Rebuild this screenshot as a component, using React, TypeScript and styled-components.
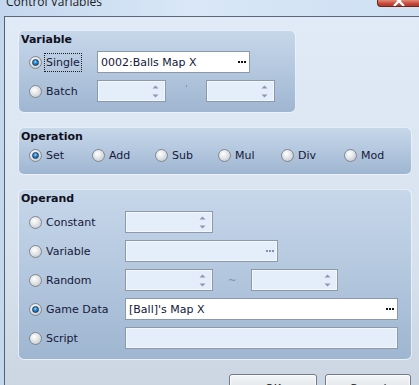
import React from 'react';
import styled, { createGlobalStyle } from 'styled-components';

const GlobalStyle = createGlobalStyle`
  html, body {
    margin: 0;
    padding: 0;
    overflow: hidden;
    background: #c8dbf1;
  }
  body {
    font-family: "DejaVu Sans", Verdana, sans-serif;
    font-size: 11px;
    color: #16183a;
  }
`;

const Window = styled.div`
  width: 419px;
  height: 385px;
  display: flex;
  flex-direction: column;
  overflow: hidden;
  background: linear-gradient(90deg, #c3d7ee 0%, #d9e7f7 45%, #cfe0f3 100%);
`;

const TitleBar = styled.div`
  height: 16px;
  flex: none;
  display: flex;
  align-items: flex-start;
  padding-left: 6px;
`;

const TitleText = styled.div`
  font-family: "Open Sans", "DejaVu Sans", sans-serif;
  font-size: 12px;
  line-height: 12px;
  margin-top: -4px;
  color: #1b1b1b;
`;

const CloseButton = styled.div`
  margin-left: auto;
  width: 42px;
  height: 7px;
  box-sizing: border-box;
  border: 1px solid #6e2418;
  border-top: none;
  border-right: none;
  border-radius: 0 0 0 4px;
  background: linear-gradient(180deg, #e28a78 0%, #c6473a 60%, #b13a2c 100%);
  overflow: hidden;
  display: flex;
  justify-content: center;
`;

const Frame = styled.div`
  flex: 1;
  display: flex;
  padding-left: 4px;
`;

const Client = styled.div`
  flex: 1;
  border-left: 1px solid #56616e;
  border-top: 1px solid #5c6876;
  background: linear-gradient(180deg, #e1ebf7 0%, #d9e3ef 60%, #cad5e1 100%);
  padding: 13px 0 0 13px;
  display: flex;
  flex-direction: column;
  align-items: flex-start;
  gap: 14px;
`;

const Group = styled.div<{ $w: number; $h: number }>`
  width: ${(p) => p.$w}px;
  height: ${(p) => p.$h}px;
  box-sizing: border-box;
  border: 1px solid rgba(240, 246, 252, 0.85);
  border-radius: 6px;
  background: linear-gradient(180deg, #c7d7ea 0%, #b3c7de 50%, #9fb6d1 100%);
  padding: 2px 0 0 2px;
  display: flex;
  flex-direction: column;
`;

const GroupTitle = styled.div`
  font-weight: bold;
  line-height: 13px;
  color: #101020;
`;

const Rows = styled.div<{ $top: number }>`
  margin-top: ${(p) => p.$top}px;
  padding-left: 8px;
  display: flex;
  flex-direction: column;
  gap: 7px;
`;

const Row = styled.div<{ $label: number }>`
  display: grid;
  grid-template-columns: ${(p) => p.$label}px auto;
  align-items: center;
  height: 22px;
`;

const Controls = styled.div`
  display: flex;
  align-items: center;
`;

const OptionRow = styled.div`
  display: flex;
  height: 13px;
  align-items: center;
`;

const Option = styled.label<{ $w?: number }>`
  display: flex;
  align-items: center;
  gap: 3px;
  width: ${(p) => (p.$w ? `${p.$w}px` : 'auto')};
`;

const RadioDot = styled.span<{ $on?: boolean }>`
  width: 13px;
  height: 13px;
  flex: none;
  box-sizing: border-box;
  border-radius: 50%;
  border: 1px solid #80878f;
  background: radial-gradient(circle at 40% 35%, #ffffff 0%, #e2e4e7 45%, #b9bec4 100%);
  display: flex;
  align-items: center;
  justify-content: center;
  &::after {
    content: '';
    display: ${(p) => (p.$on ? 'block' : 'none')};
    width: 7px;
    height: 7px;
    box-sizing: border-box;
    border-radius: 50%;
    border: 1px solid #17395c;
    background: radial-gradient(circle at 45% 35%, #9ad8ff 0%, #2b8bd3 40%, #0c4f8c 100%);
  }
`;

const LabelText = styled.span<{ $focus?: boolean }>`
  padding: 2px 1px;
  line-height: 13px;
  white-space: nowrap;
  outline: ${(p) => (p.$focus ? '1px dotted #202020' : 'none')};
`;

const Field = styled.div<{ $w: number; $on?: boolean }>`
  width: ${(p) => p.$w}px;
  height: 22px;
  box-sizing: border-box;
  border: 1px solid #8b99aa;
  background: ${(p) => (p.$on ? '#ffffff' : '#e4eefa')};
  box-shadow: ${(p) => (p.$on ? 'none' : 'inset 0 0 0 1px #f3f7fc')};
  display: flex;
  align-items: center;
  padding: 0 3px 0 3px;
  color: #14163a;
  white-space: nowrap;
`;

const FieldText = styled.span`
  flex: 1;
  line-height: 13px;
`;

const SpinArrows = styled.svg`
  margin-right: 3px;
  flex: none;
`;

const Between = styled.div<{ $w: number; $up?: number }>`
  width: ${(p) => p.$w}px;
  display: flex;
  justify-content: center;
  color: #8a90b2;
  margin-top: ${(p) => (p.$up ? -p.$up : 0)}px;
`;

const SmallDot = styled.span`
  width: 1px;
  height: 2px;
  background: #8a90b2;
`;

const ButtonBar = styled.div`
  align-self: stretch;
  display: flex;
  justify-content: flex-end;
  gap: 8px;
  padding-right: 8px;
`;

const DialogButton = styled.button<{ $w: number }>`
  width: ${(p) => p.$w}px;
  height: 23px;
  box-sizing: border-box;
  border: 1px solid #6f7b8c;
  border-radius: 3px;
  background: linear-gradient(180deg, #f4f6f8 0%, #e6e9ed 50%, #d6dbe1 100%);
  box-shadow: inset 0 0 0 1px #fbfcfd;
  font-family: "DejaVu Sans", Verdana, sans-serif;
  font-size: 11px;
  color: #101010;
  padding: 6px 0 0;
  line-height: 13px;
`;

const Dots = ({ gray }: { gray?: boolean }) => (
  <svg width="8" height="2" viewBox="0 0 8 2">
    {[0, 3, 6].map((x) => (
      <rect key={x} x={x} y="0" width="2" height="2" fill={gray ? '#8a8fb0' : '#101010'} />
    ))}
  </svg>
);

const Spin = () => (
  <SpinArrows width="7" height="13" viewBox="0 0 7 13">
    <path d="M3.5 0.5 L6.5 3.5 L0.5 3.5 Z" fill="#9192b4" />
    <path d="M0.5 9.5 L6.5 9.5 L3.5 12.5 Z" fill="#9192b4" />
  </SpinArrows>
);

const Radio = ({ label, on, focus, w }: { label: string; on?: boolean; focus?: boolean; w?: number }) => (
  <Option $w={w}>
    <RadioDot $on={on} />
    <LabelText $focus={focus}>{label}</LabelText>
  </Option>
);

const operations = ['Set', 'Add', 'Sub', 'Mul', 'Div', 'Mod'];

export default function App() {
  return (
    <>
      <GlobalStyle />
      <Window>
        <TitleBar>
          <TitleText>Control Variables</TitleText>
          <CloseButton>
            <svg width="12" height="8" viewBox="0 0 12 8">
              <path d="M1 -4 L11 6 M11 -4 L1 6" stroke="#ffffff" strokeWidth="2.4" />
            </svg>
          </CloseButton>
        </TitleBar>
        <Frame>
          <Client>
            <Group $w={278} $h={83}>
              <GroupTitle>Variable</GroupTitle>
              <Rows $top={5}>
                <Row $label={68}>
                  <Radio label="Single" on focus />
                  <Controls>
                    <Field $w={153} $on>
                      <FieldText>0002:Balls Map X</FieldText>
                      <Dots />
                    </Field>
                  </Controls>
                </Row>
                <Row $label={68}>
                  <Radio label="Batch" />
                  <Controls>
                    <Field $w={69}>
                      <FieldText />
                      <Spin />
                    </Field>
                    <Between $w={40} $up={10}>
                      <SmallDot />
                    </Between>
                    <Field $w={69}>
                      <FieldText />
                      <Spin />
                    </Field>
                  </Controls>
                </Row>
              </Rows>
            </Group>

            <Group $w={394} $h={48}>
              <GroupTitle>Operation</GroupTitle>
              <Rows $top={6}>
                <OptionRow>
                  {operations.map((op, i) => (
                    <Radio key={op} label={op} on={i === 0} w={63} />
                  ))}
                </OptionRow>
              </Rows>
            </Group>

            <Group $w={394} $h={171}>
              <GroupTitle>Operand</GroupTitle>
              <Rows $top={6}>
                <Row $label={96}>
                  <Radio label="Constant" />
                  <Controls>
                    <Field $w={88}>
                      <FieldText />
                      <Spin />
                    </Field>
                  </Controls>
                </Row>
                <Row $label={96}>
                  <Radio label="Variable" />
                  <Controls>
                    <Field $w={153}>
                      <FieldText />
                      <Dots gray />
                    </Field>
                  </Controls>
                </Row>
                <Row $label={96}>
                  <Radio label="Random" />
                  <Controls>
                    <Field $w={88}>
                      <FieldText />
                      <Spin />
                    </Field>
                    <Between $w={38}>~</Between>
                    <Field $w={87}>
                      <FieldText />
                      <Spin />
                    </Field>
                  </Controls>
                </Row>
                <Row $label={96}>
                  <Radio label="Game Data" on />
                  <Controls>
                    <Field $w={273} $on>
                      <FieldText>[Ball]'s Map X</FieldText>
                      <Dots />
                    </Field>
                  </Controls>
                </Row>
                <Row $label={96}>
                  <Radio label="Script" />
                  <Controls>
                    <Field $w={273}>
                      <FieldText />
                    </Field>
                  </Controls>
                </Row>
              </Rows>
            </Group>

            <ButtonBar>
              <DialogButton $w={88}>OK</DialogButton>
              <DialogButton $w={86}>Cancel</DialogButton>
            </ButtonBar>
          </Client>
        </Frame>
      </Window>
    </>
  );
}
